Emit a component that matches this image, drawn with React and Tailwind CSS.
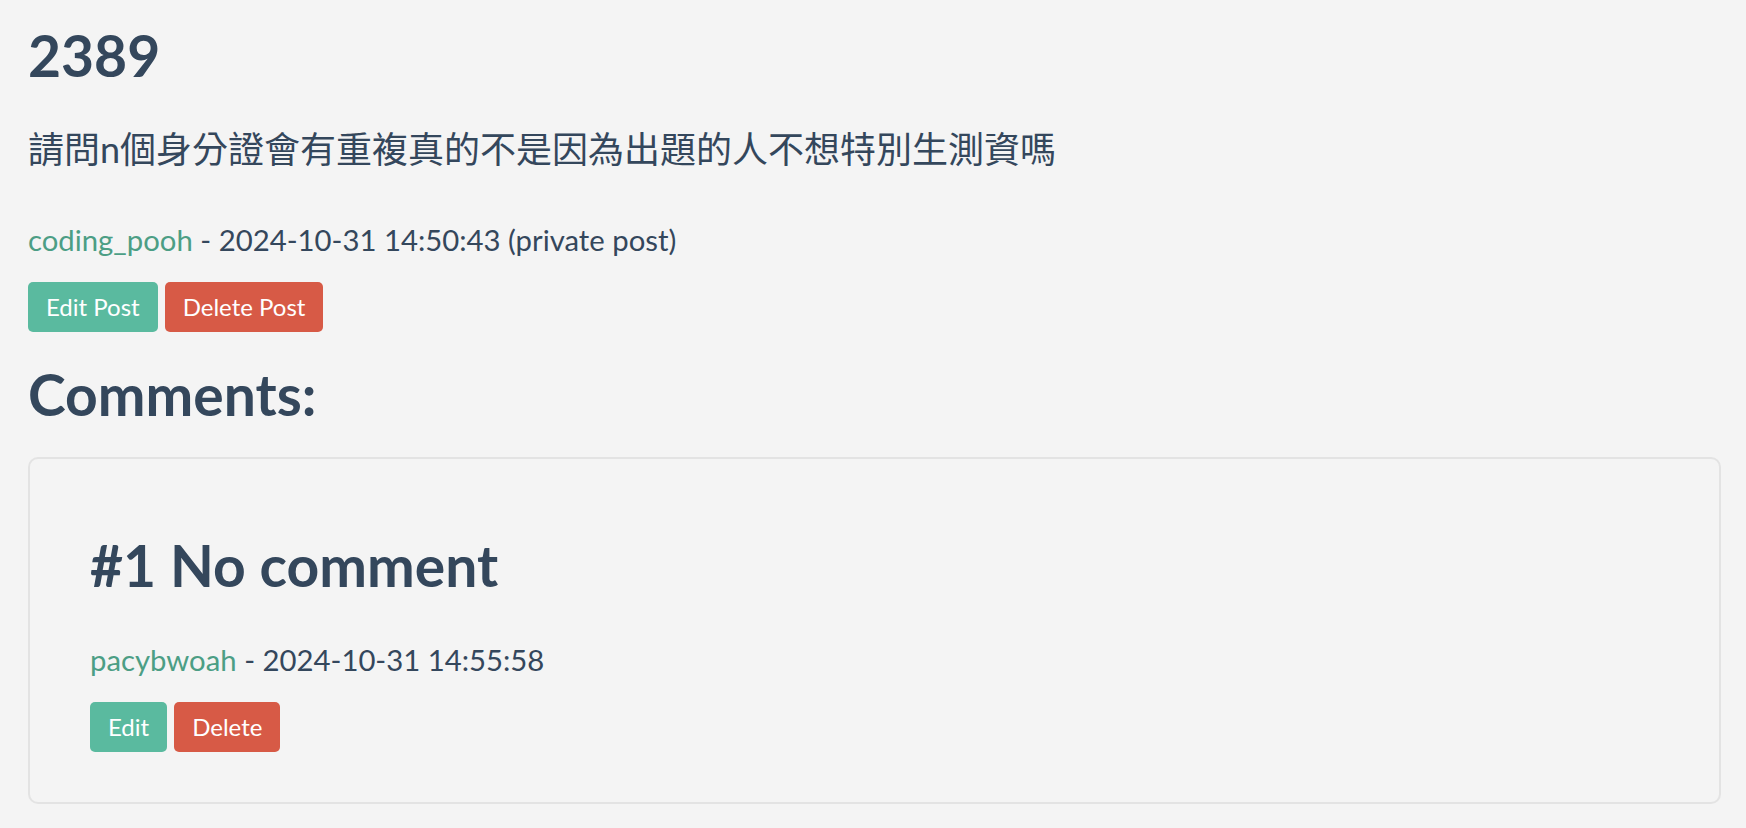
import React from 'react';

const post = {
    id: 2389,
    body: '請問n個身分證會有重複真的不是因為出題的人不想特別生測資嗎',
    author: 'coding_pooh',
    createdAt: '2024-10-31 14:50:43',
};

const comments = [
    { id: 1, body: 'No comment', author: 'pacybwoah', createdAt: '2024-10-31 14:55:58' },
];

function Meta({ author, createdAt, note }) {
    return (
        <p className="text-[29.3px] leading-[1.5]">
            <a href="#" className="text-[#4c9e85]">{author}</a>
            {' - '}
            {createdAt}
            {note ? ` ${note}` : ''}
        </p>
    );
}

function ActionButtons({ editLabel, deleteLabel }) {
    return (
        <div className="flex gap-[7px]">
            <button className="h-[50px] px-[18px] rounded-[5px] bg-[#5aba9f] text-white text-[24px]">
                {editLabel}
            </button>
            <button className="h-[50px] px-[18px] rounded-[5px] bg-[#d75a46] text-white text-[24px]">
                {deleteLabel}
            </button>
        </div>
    );
}

export default function App() {
    return (
        <div
            className="min-h-screen bg-[#f4f4f4] pl-[28px] pr-[25px] pt-[21px] pb-[20px] text-[#34475c]"
            style={{ fontFamily: 'Lato, "Noto Sans CJK TC", sans-serif' }}
        >
            <h1 className="text-[57px] font-bold leading-[1.2]">{post.id}</h1>
            <p className="mt-[33px] text-[36px] leading-[1.5]">{post.body}</p>
            <div className="mt-[42px]">
                <Meta author={post.author} createdAt={post.createdAt} note="(private post)" />
            </div>
            <div className="mt-[20px]">
                <ActionButtons editLabel="Edit Post" deleteLabel="Delete Post" />
            </div>

            <h1 className="mt-[28px] text-[57px] font-bold leading-[1.2]">Comments:</h1>

            {comments.map((c) => (
                <div
                    key={c.id}
                    className="mt-[28px] border-2 border-[#e3e3e3] rounded-[10px] px-[60px] pt-[72px] pb-[50px]"
                >
                    <h2 className="text-[57px] font-bold leading-[1.2]">
                        #{c.id} {c.body}
                    </h2>
                    <div className="mt-[39px]">
                        <Meta author={c.author} createdAt={c.createdAt} />
                    </div>
                    <div className="mt-[20px]">
                        <ActionButtons editLabel="Edit" deleteLabel="Delete" />
                    </div>
                </div>
            ))}
        </div>
    );
}
